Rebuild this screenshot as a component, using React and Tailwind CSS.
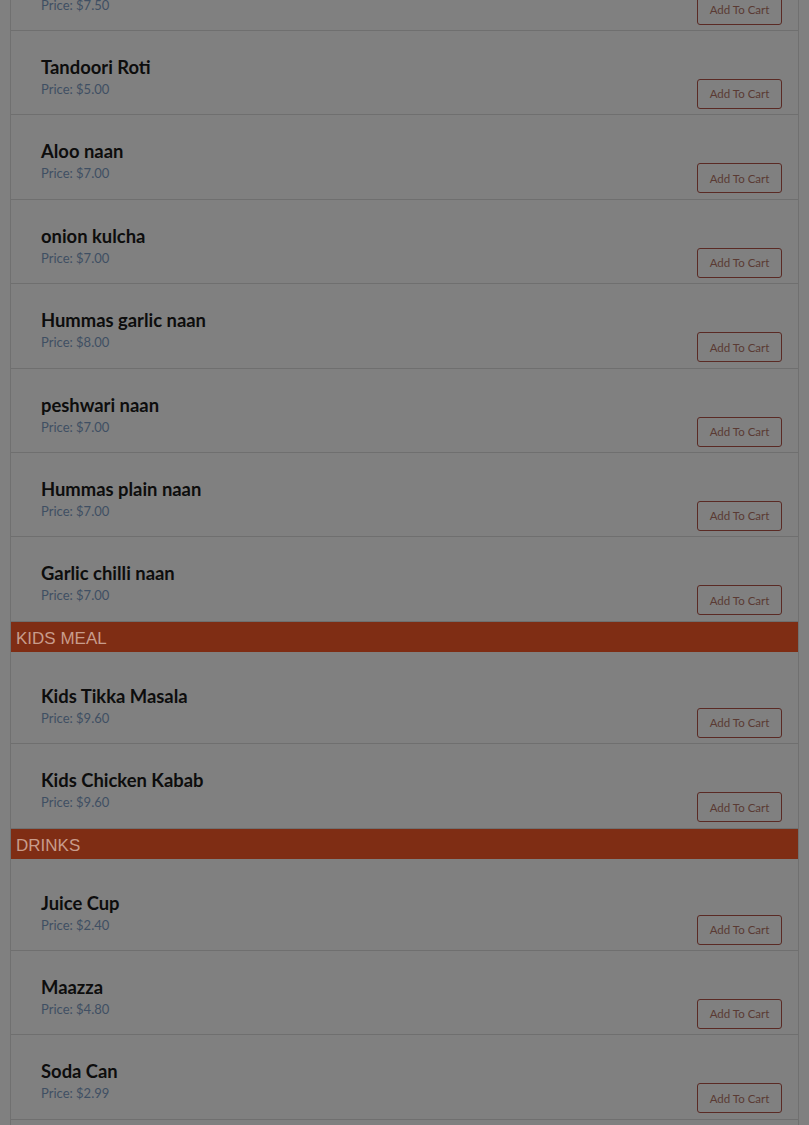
const sections = [
    {
        title: null,
        items: [
            { name: 'Butter naan', price: '7.50' },
            { name: 'Tandoori Roti', price: '5.00' },
            { name: 'Aloo naan', price: '7.00' },
            { name: 'onion kulcha', price: '7.00' },
            { name: 'Hummas garlic naan', price: '8.00' },
            { name: 'peshwari naan', price: '7.00' },
            { name: 'Hummas plain naan', price: '7.00' },
            { name: 'Garlic chilli naan', price: '7.00' },
        ],
    },
    {
        title: 'KIDS MEAL',
        items: [
            { name: 'Kids Tikka Masala', price: '9.60' },
            { name: 'Kids Chicken Kabab', price: '9.60' },
        ],
    },
    {
        title: 'DRINKS',
        items: [
            { name: 'Juice Cup', price: '2.40' },
            { name: 'Maazza', price: '4.80' },
            { name: 'Soda Can', price: '2.99' },
            { name: 'Lassi', price: '3.50' },
        ],
    },
];

function MenuRow({ name, price }) {
    return (
        <div className="flex items-end justify-between border-b border-[#6f6f6f] pl-[30px] pr-[16px] pt-[26px] pb-[5.4px]">
            <div className="flex flex-col pb-[11px]">
                <span className="text-[18.4px] leading-[20px] font-bold text-[#0d0d0d]">{name}</span>
                <span className="mt-[3px] text-[13px] leading-[18px] text-[#3f4f63]">Price: ${price}</span>
            </div>
            <button className="h-[30px] w-[85px] rounded-[3px] border border-[#5a2a24] text-[11.5px] text-[#5a3a33]">
                Add To Cart
            </button>
        </div>
    );
}

export default function App() {
    return (
        <div className="min-h-screen overflow-hidden bg-[#808080] font-['Lato',sans-serif]">
            <div className="mx-[10px] mt-[-53.4px] border-x border-[#707070]">
                {sections.map((section, i) => (
                    <section key={i}>
                        {section.title && (
                            <div className="h-[30px] bg-[#7f2d14] pl-[5px] pt-[7px] text-[17px] leading-[20px] text-[#c89c8c] font-['Liberation_Sans',Arial,sans-serif]">
                                {section.title}
                            </div>
                        )}
                        <div className={section.title ? 'pt-[8px]' : ''}>
                            {section.items.map((item) => (
                                <MenuRow key={item.name} {...item} />
                            ))}
                        </div>
                    </section>
                ))}
            </div>
        </div>
    );
}
